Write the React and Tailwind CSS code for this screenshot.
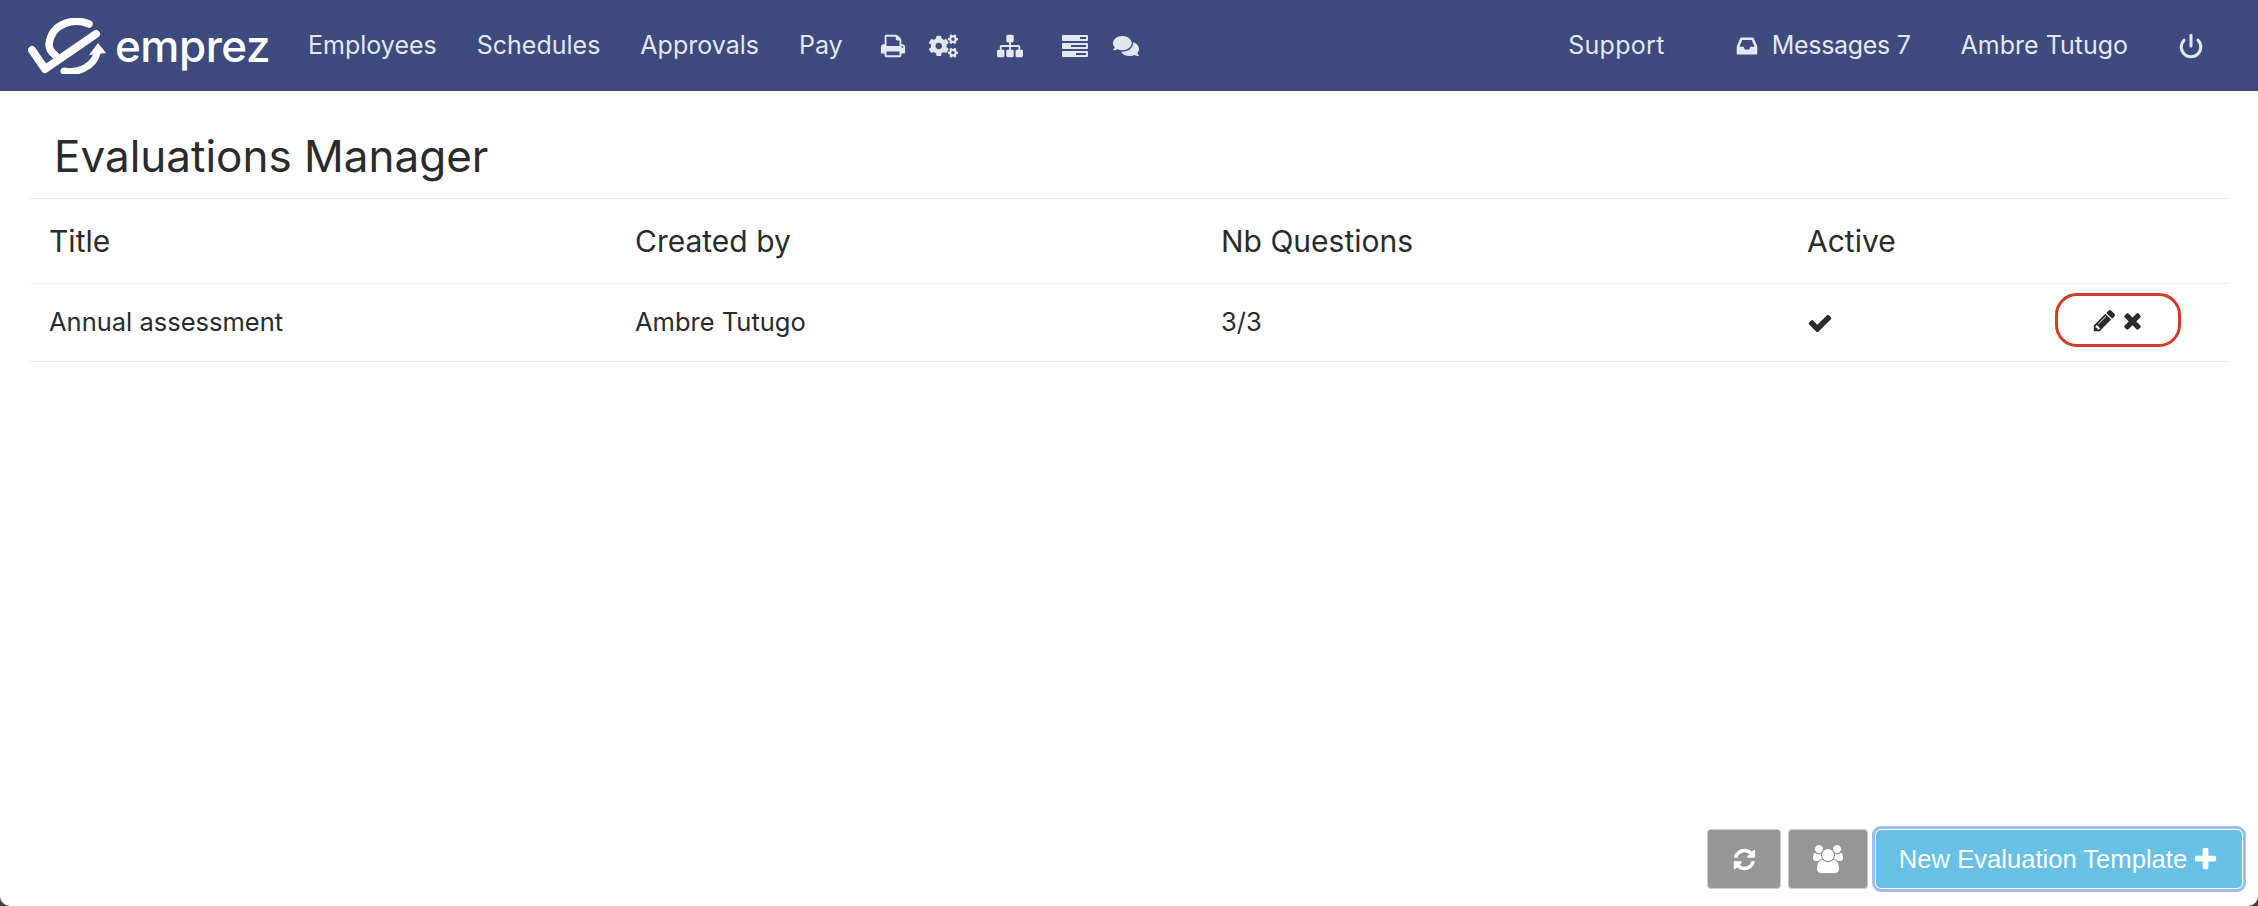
import * as React from 'react';
import { FaCogs, FaComments } from 'react-icons/fa';
import { Power } from 'lucide-react';

// font awesome 4 glyphs, the newer set in react-icons draws these differently
const Glyph = ({ d, box = '0 0 1792 1792', className }) => (
  <svg viewBox={box} className={className} fill="currentColor">
    <path d={d} />
  </svg>
);

const PENCIL = 'M491 1536l91-91-235-235-91 91v107h128v128h107zm523-928q0-22-22-22-10 0-17 7l-542 542q-7 7-7 17 0 22 22 22 10 0 17-7l542-542q7-7 7-17zm-54-192l416 416-832 832h-416v-416zm683 96q0 53-37 90l-166 166-416-416 166-165q36-38 90-38 53 0 91 38l235 234q37 39 37 91z';
const TIMES = 'M1490 1322q0 40-28 68l-136 136q-28 28-68 28t-68-28l-294-294-294 294q-28 28-68 28t-68-28l-136-136q-28-28-28-68t28-68l294-294-294-294q-28-28-28-68t28-68l136-136q28-28 68-28t68 28l294 294 294-294q28-28 68-28t68 28l136 136q28 28 28 68t-28 68l-294 294 294 294q28 28 28 68z';
const CHECK = 'M1671 566q0 40-28 68l-724 724-136 136q-28 28-68 28t-68-28l-136-136-362-362q-28-28-28-68t28-68l136-136q28-28 68-28t68 28l294 295 656-657q28-28 68-28t68 28l136 136q28 28 28 68z';
const PLUS = 'M1600 736v192q0 40-28 68t-68 28h-416v416q0 40-28 68t-68 28h-192q-40 0-68-28t-28-68v-416h-416q-40 0-68-28t-28-68v-192q0-40 28-68t68-28h416v-416q0-40 28-68t68-28h192q40 0 68 28t28 68v416h416q40 0 68 28t28 68z';
const REFRESH = 'M1639 1056q0 5-1 7-64 268-268 434.5t-478 166.5q-146 0-282.5-55t-243.5-157l-129 129q-19 19-45 19t-45-19-19-45v-448q0-26 19-45t45-19h448q26 0 45 19t19 45-19 45l-137 137q71 66 161 102t187 36q134 0 250-65t186-179q11-17 53-117 8-23 30-23h192q13 0 22.5 9.5t9.5 22.5zm25-800v448q0 26-19 45t-45 19h-448q-26 0-45-19t-19-45 19-45l138-138q-148-137-349-137-134 0-250 65t-186 179q-11 17-53 117-8 23-30 23h-199q-13 0-22.5-9.5t-9.5-22.5v-7q65-268 270-434.5t480-166.5q146 0 284 55.5t245 156.5l130-129q19-19 45-19t45 19 19 45z';
const USERS = 'M593 896q-162 5-265 128h-134q-82 0-138-40.500t-56-118.500q0-353 124-353 6 0 43.500 21t97.500 42.500 119 21.500q67 0 133-23-5 37-5 66 0 139 81 256zm1071 637q0 120-73 189.500t-194 69.500h-874q-121 0-194-69.500t-73-189.500q0-53 3.500-103.500t14-109 26.500-108.500 43-97.500 62-81 85.500-53.500 111.500-20q10 0 43 21.500t73 48 107 48 135 21.500 135-21.500 107-48 73-48 43-21.500q61 0 111.500 20t85.500 53.500 62 81 43 97.500 26.500 108.500 14 109 3.500 103.500zm-1024-1277q0 106-75 181t-181 75-181-75-75-181 75-181 181-75 181 75 75 181zm704 384q0 159-112.500 271.500t-271.500 112.500-271.500-112.500-112.500-271.500 112.500-271.500 271.500-112.500 271.500 112.500 112.500 271.500zm576 225q0 78-56 118.500t-138 40.500h-134q-103-123-265-128 81-117 81-256 0-29-5-66 66 23 133 23 59 0 119-21.500t97.500-42.500 43.500-21q124 0 124 353zm-128-609q0 106-75 181t-181 75-181-75-75-181 75-181 181-75 181 75 75 181z';
const PRINT = 'M448 1536h896v-256h-896v256zm0-640h896v-384h-160q-40 0-68-28t-28-68v-160h-640v640zm1152 64q0-26-19-45t-45-19-45 19-19 45 19 45 45 19 45-19 19-45zm128 0v416q0 13-9.500 22.500t-22.500 9.500h-224v160q0 40-28 68t-68 28h-960q-40 0-68-28t-28-68v-160h-224q-13 0-22.500-9.500t-9.500-22.500v-416q0-79 56.500-135.500t135.500-56.500h64v-544q0-40 28-68t68-28h672q40 0 88 20t76 48l152 152q28 28 48 76t20 88v256h64q79 0 135.500 56.500t56.500 135.500z';
const SITEMAP = 'M1792 1248v320q0 40-28 68t-68 28h-320q-40 0-68-28t-28-68v-320q0-40 28-68t68-28h96v-192h-512v192h96q40 0 68 28t28 68v320q0 40-28 68t-68 28h-320q-40 0-68-28t-28-68v-320q0-40 28-68t68-28h96v-192h-512v192h96q40 0 68 28t28 68v320q0 40-28 68t-68 28h-320q-40 0-68-28t-28-68v-320q0-40 28-68t68-28h96v-192q0-52 38-90t90-38h512v-192h-96q-40 0-68-28t-28-68v-320q0-40 28-68t68-28h320q40 0 68 28t28 68v320q0 40-28 68t-68 28h-96v192h512q52 0 90 38t38 90v192h96q40 0 68 28t28 68z';
const INBOX = 'M1151 960h316q-1-3-2.500-8.500t-2.500-7.500l-212-496h-708l-212 496q-1 2-2.500 7.500t-2.500 8.500h316l95 192h320zm513 30v482q0 26-19 45t-45 19h-1408q-26 0-45-19t-19-45v-482q0-62 25-123l238-552q10-25 36.500-42t52.500-17h832q26 0 52.500 17t36.500 42l238 552q25 61 25 123z';

const Logo = () => (
  <div className="flex items-center">
    <svg viewBox="0 0 80 56" className="w-[80px] h-[56px]" fill="none" stroke="white" strokeLinecap="round">
      <path d="M4 32 L17 51 L68 16" strokeWidth="8" strokeLinejoin="round" />
      <path d="M61 6 C47 0 24 4 21 26 C21 30 23 34 27 37" strokeWidth="7.5" />
      <path d="M36 53 C50 56 66 48 69 35" strokeWidth="7" />
      <path d="M61 37 L70 25 L78 35 Z" fill="white" stroke="none" />
    </svg>
    <span className="ml-[7px] text-[44px] leading-none font-medium text-white tracking-[-0.5px]">emprez</span>
  </div>
);

const ServerIcon = ({ className }) => (
  <svg viewBox="0 0 26 24" className={className}>
    <rect x="0" y="1" width="26" height="6" rx="1" fill="currentColor" />
    <rect x="0" y="9" width="26" height="6" rx="1" fill="currentColor" />
    <rect x="0" y="17" width="26" height="6" rx="1" fill="currentColor" />
    <rect x="18" y="3" width="6" height="2" fill="#3c4a7d" />
    <rect x="9" y="11" width="15" height="2" fill="#3c4a7d" />
    <rect x="14" y="19" width="10" height="2" fill="#3c4a7d" />
  </svg>
);

const navLink = 'text-[25px] leading-none text-[#e4e6f0]';

const App = () => {
  return (
    <div className="w-[2258px] h-[906px] bg-[#444444]">
      <div className="w-full h-full bg-white rounded-b-[10px] flex flex-col font-['Inter',sans-serif] text-[#292b2c]">
        {/* Top nav */}
        <nav className="h-[91px] shrink-0 bg-[#3c4a7d] flex items-center pl-[28px] pr-[54px]">
          <Logo />
          <a className={`${navLink} ml-[38px]`}>Employees</a>
          <a className={`${navLink} ml-[40px]`}>Schedules</a>
          <a className={`${navLink} ml-[40px]`}>Approvals</a>
          <a className={`${navLink} ml-[40px]`}>Pay</a>
          <div className="flex items-center text-[#e4e6f0] ml-[37px]">
            <Glyph d={PRINT} className="w-[26px] h-[26px]" />
            <FaCogs className="w-[29px] h-[26px] ml-[23px]" />
            <Glyph d={SITEMAP} className="w-[26px] h-[26px] ml-[39px]" />
            <ServerIcon className="w-[26px] h-[24px] ml-[39px]" />
            <FaComments className="w-[26px] h-[24px] ml-[25px]" />
          </div>
          <a className={`${navLink} ml-auto tracking-[0.3px]`}>Support</a>
          <Glyph d={INBOX} className="w-[24px] h-[24px] ml-[70px] text-[#e4e6f0]" />
          <a className={`${navLink} ml-[13px] tracking-[-0.3px]`}>Messages 7</a>
          <a className={`${navLink} ml-[50px]`}>Ambre Tutugo</a>
          <Power className="w-[26px] h-[26px] ml-[50px] text-[#e4e6f0]" strokeWidth={2.8} />
        </nav>

        {/* Page */}
        <main className="flex-1 flex flex-col px-[30px]">
          <h1 className="h-[108px] flex items-center pl-[24px] pt-[23px] text-[44px] font-normal leading-none border-b border-[#eceeef]">
            Evaluations Manager
          </h1>
          <div className="h-[85px] grid grid-cols-[586px_586px_586px_1fr] items-center pl-[19px] text-[30px] border-b border-[#eceeef]">
            <div>Title</div>
            <div>Created by</div>
            <div>Nb Questions</div>
            <div>Active</div>
          </div>
          <div className="h-[78px] grid grid-cols-[586px_586px_586px_248px_1fr] items-center pl-[19px] text-[25.5px] border-b border-[#eceeef]">
            <div>Annual assessment</div>
            <div>Ambre Tutugo</div>
            <div>3/3</div>
            <div>
              <Glyph d={CHECK} className="w-[26px] h-[26px]" />
            </div>
            <div className="w-[126px] h-[54px] mb-[5px] rounded-[22px] border-[3px] border-[#d23c22] flex items-center justify-center gap-[3px]">
              <Glyph d={PENCIL} className="w-[25px] h-[25px]" />
              <Glyph d={TIMES} className="w-[25px] h-[25px]" />
            </div>
          </div>

          {/* Footer actions */}
          <div className="mt-auto mb-[17px] -mr-[15px] flex justify-end items-center gap-[7px]">
            <button className="w-[74px] h-[60px] rounded-[4px] bg-[#969696] border border-[#cccccc] flex items-center justify-center text-white">
              <Glyph d={REFRESH} className="w-[25px] h-[25px]" />
            </button>
            <button className="w-[80px] h-[60px] rounded-[4px] bg-[#969696] border border-[#cccccc] flex items-center justify-center text-white">
              <Glyph d={USERS} box="0 0 1920 1792" className="w-[30px] h-[28px]" />
            </button>
            <button className="w-[368px] h-[60px] rounded-[6px] bg-[#67c0e6] border border-white outline-[3px] outline-[#9dbdec] flex items-center justify-center gap-[5px] text-white text-[25.6px] font-['Liberation_Sans',sans-serif]">
              New Evaluation Template
              <Glyph d={PLUS} className="w-[27px] h-[27px]" />
            </button>
          </div>
        </main>
      </div>
    </div>
  );
};

export default App;
